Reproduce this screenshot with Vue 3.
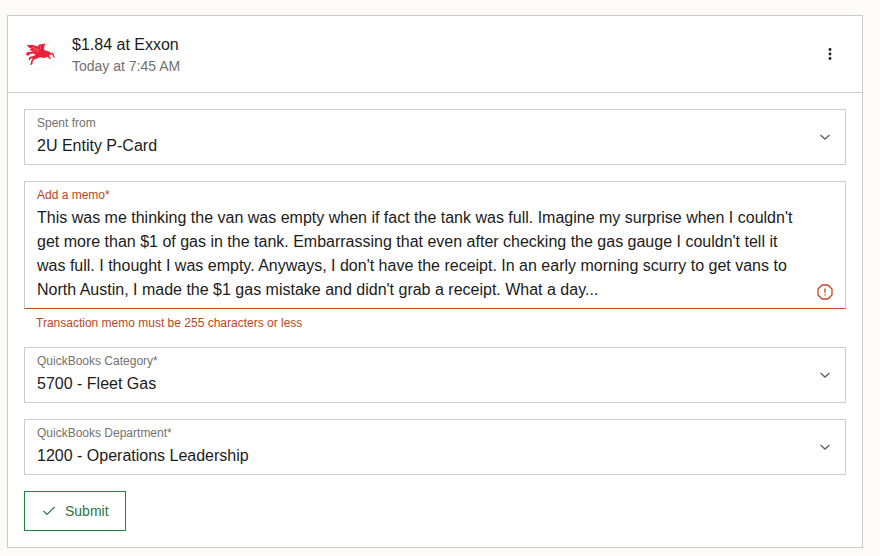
<!-- TransactionCard.vue -->
<script setup>
import { ref } from 'vue';

const account = ref('2U Entity P-Card');
const category = ref('5700 - Fleet Gas');
const department = ref('1200 - Operations Leadership');
const memo = ref(
  "This was me thinking the van was empty when if fact the tank was full. Imagine my surprise when I couldn't get more than $1 of gas in the tank. Embarrassing that even after checking the gas gauge I couldn't tell it was full. I thought I was empty. Anyways, I don't have the receipt. In an early morning scurry to get vans to North Austin, I made the $1 gas mistake and didn't grab a receipt. What a day..."
);
</script>

<template>
  <main class="page">
    <section class="card">
      <header class="card-header">
        <svg class="logo" viewBox="0 0 32 32" aria-hidden="true">
          <circle cx="16" cy="15" r="15.5" fill="#fff" stroke="#f5f4f3" />
          <path
            fill="#ea2037"
            d="M3 6 L9 6 L14.2 7.6 L14.6 5.4 L18 5.2 L21.3 4.4 L20.4 7 L20 10.8 L22.5 12 L25.4 12.6 L26.4 14 L29 13.7 L30.8 18.4 L30 18.9 L28 15.2 L25.4 16 L25.6 18 L27 19.6 L26 20.2 L23.4 17.8 L20.6 19 L16 18.3 L13.4 19.2 L10.2 20.6 L8.7 22.5 L8.4 25.3 L6.4 26.2 L7 22.4 L8.8 19.4 L6.4 19.6 L6 21.6 L4.8 20.9 L5.2 18 L9.6 17 L11.6 15.4 L9 14.4 L6 14.9 L4.2 16.7 L2 16 L2.7 13.6 L6 12.8 L9.2 13 L6.6 11.6 L5.4 10 L8 10.2 L4.5 8.2 Z"
          />
          <path
            fill="none"
            stroke="#f9a0aa"
            stroke-width=".5"
            d="M8 8 L15 10.8 M9 10.6 L14.5 12.4 M16.4 7 L16.6 10"
          />
        </svg>
        <div class="heading">
          <h1 class="title">$1.84 at Exxon</h1>
          <p class="time">Today at 7:45 AM</p>
        </div>
        <button class="menu-btn" type="button" aria-label="More options">
          <svg width="24" height="24" viewBox="0 0 24 24" fill="#1c1b1a">
            <circle cx="12" cy="6.5" r="1.4" />
            <circle cx="12" cy="11" r="1.4" />
            <circle cx="12" cy="15.5" r="1.4" />
          </svg>
        </button>
      </header>

      <form class="form" @submit.prevent>
        <div class="field">
          <label for="account">Spent from</label>
          <select id="account" v-model="account">
            <option>2U Entity P-Card</option>
          </select>
          <svg class="chevron" viewBox="0 0 24 24"><path d="M7.5 10 L12 14 L16.5 10" /></svg>
        </div>

        <div class="memo">
          <div class="field invalid">
            <label for="memo">Add a memo*</label>
            <textarea id="memo" v-model="memo" rows="4" spellcheck="false" aria-describedby="memo-error"></textarea>
            <svg class="alert" viewBox="0 0 16 16" aria-hidden="true">
              <path d="M5.1 1 H10.9 L15 5.1 V10.9 L10.9 15 H5.1 L1 10.9 V5.1 Z M8 4.5 V8.8 M8 10.2 V11.5" />
            </svg>
          </div>
          <p id="memo-error" class="error">Transaction memo must be 255 characters or less</p>
        </div>

        <div class="field">
          <label for="category">QuickBooks Category*</label>
          <select id="category" v-model="category">
            <option>5700 - Fleet Gas</option>
          </select>
          <svg class="chevron" viewBox="0 0 24 24"><path d="M7.5 10 L12 14 L16.5 10" /></svg>
        </div>

        <div class="field">
          <label for="department">QuickBooks Department*</label>
          <select id="department" v-model="department">
            <option>1200 - Operations Leadership</option>
          </select>
          <svg class="chevron" viewBox="0 0 24 24"><path d="M7.5 10 L12 14 L16.5 10" /></svg>
        </div>

        <button class="submit-btn" type="submit">
          <svg width="16" height="16" viewBox="0 0 16 16"><path d="M2.5 8 L6 11.5 L13.5 4" /></svg>
          Submit
        </button>
      </form>
    </section>
  </main>
</template>

<style>
body {
  background: #fcfbfa;
}
</style>

<style scoped>
.page {
  padding: 15px 17px 8px 7px;
  font-family: "Liberation Sans", Arial, sans-serif;
  color: #1c1b1a;
}

.card {
  background: #fff;
  border: 1px solid #cccbca;
}

.card-header {
  display: flex;
  align-items: center;
  gap: 16px;
  padding: 18px 20px 16px 16px;
  border-bottom: 1px solid #cccbca;
}

.logo {
  width: 32px;
  height: 32px;
}

.heading {
  flex: 1;
}

.title,
.time {
  margin: 0;
  font-weight: 400;
}

.title {
  font-size: 16px;
  line-height: 22px;
}

.time {
  font-size: 14px;
  line-height: 20px;
  color: #73716e;
}

.menu-btn {
  display: flex;
  padding: 0;
  border: 0;
  background: none;
}

.form {
  display: flex;
  flex-direction: column;
  gap: 16px;
  padding: 16px;
}

.field {
  display: grid;
  grid-template-columns: 1fr 24px;
  column-gap: 16px;
  row-gap: 3px;
  padding: 5px 8px 6px 12px;
  border: 1px solid #cccbca;
}

.field label {
  grid-column: 1;
  font-size: 12px;
  line-height: 16px;
  color: #73716e;
}

.field select,
.field textarea {
  grid-column: 1;
  display: block;
  width: 100%;
  margin: 0;
  padding: 0;
  border: 0;
  outline: 0;
  background: none;
  appearance: none;
  font: 16px/24px "Liberation Sans", Arial, sans-serif;
  color: #1c1b1a;
}

.field select {
  height: 24px;
}

.field textarea {
  resize: none;
  overflow: hidden;
}

.chevron {
  grid-column: 2;
  grid-row: 1 / 3;
  align-self: center;
  width: 24px;
  height: 24px;
  fill: none;
  stroke: #62605d;
  stroke-width: 1.4;
}

.field.invalid {
  border-bottom-color: #cc4b23;
}

.field.invalid label,
.error {
  color: #b94722;
}

.alert {
  grid-column: 2;
  grid-row: 1 / 3;
  align-self: end;
  justify-self: center;
  width: 16px;
  height: 16px;
  margin-bottom: 2px;
  fill: none;
  stroke: #c24620;
  stroke-width: 1.3;
}

.error {
  margin: 6px 12px 0;
  font-size: 12px;
  line-height: 16px;
}

.submit-btn {
  display: flex;
  align-items: center;
  align-self: flex-start;
  gap: 8px;
  height: 40px;
  padding: 0 16px;
  border: 1px solid #1f8443;
  background: #fff;
  font: 14px/20px "Liberation Sans", Arial, sans-serif;
  color: #287641;
}

.submit-btn svg {
  fill: none;
  stroke: #287641;
  stroke-width: 1.2;
}
</style>
